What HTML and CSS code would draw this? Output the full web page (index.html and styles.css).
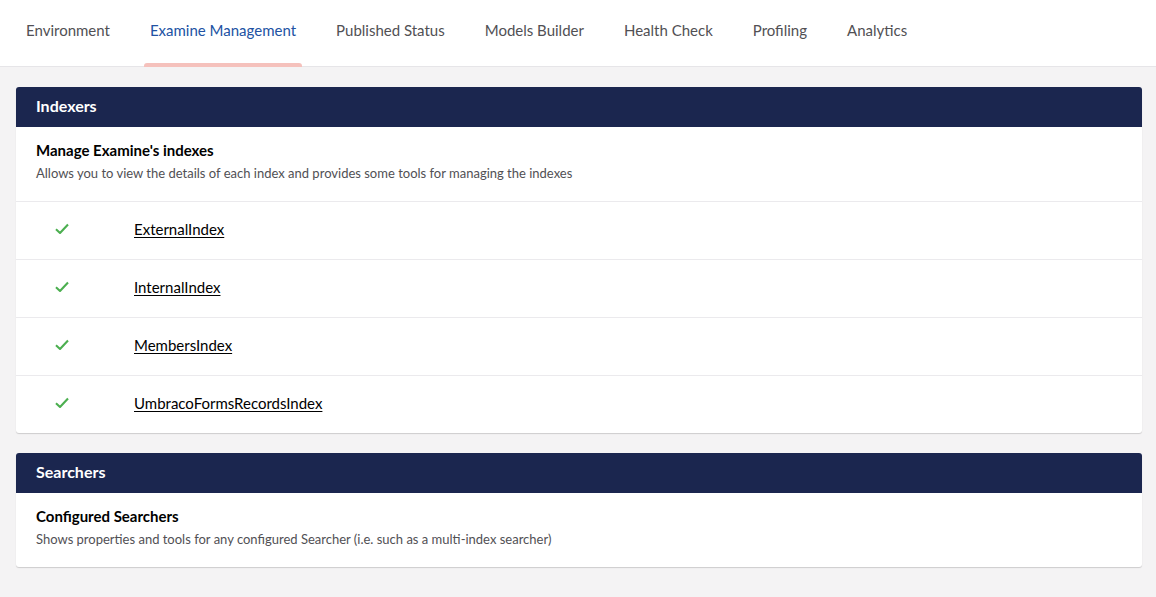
FILE: index.html
```html
<!DOCTYPE html>
<html lang="en">
<head>
<meta charset="utf-8">
<title>Examine Management</title>
<link rel="stylesheet" href="styles.css">
</head>
<body>
<header class="topbar">
  <nav class="tabs">
    <a class="tab">Environment</a>
    <a class="tab active">Examine Management</a>
    <a class="tab">Published Status</a>
    <a class="tab">Models Builder</a>
    <a class="tab">Health Check</a>
    <a class="tab">Profiling</a>
    <a class="tab">Analytics</a>
  </nav>
</header>
<main class="content">
  <section class="panel">
    <div class="panel-head">Indexers</div>
    <div class="intro">
      <div class="intro-title">Manage Examine's indexes</div>
      <div class="intro-desc">Allows you to view the details of each index and provides some tools for managing the indexes</div>
    </div>
    <div class="row">
      <svg class="check" viewBox="0 0 14 12"><path d="M1 6.3 L5 10 L13 1.5" fill="none" stroke="#4caf50" stroke-width="2.1" stroke-linejoin="round"/></svg>
      <a class="idx">ExternalIndex</a>
    </div>
    <div class="row">
      <svg class="check" viewBox="0 0 14 12"><path d="M1 6.3 L5 10 L13 1.5" fill="none" stroke="#4caf50" stroke-width="2.1" stroke-linejoin="round"/></svg>
      <a class="idx">InternalIndex</a>
    </div>
    <div class="row">
      <svg class="check" viewBox="0 0 14 12"><path d="M1 6.3 L5 10 L13 1.5" fill="none" stroke="#4caf50" stroke-width="2.1" stroke-linejoin="round"/></svg>
      <a class="idx">MembersIndex</a>
    </div>
    <div class="row">
      <svg class="check" viewBox="0 0 14 12"><path d="M1 6.3 L5 10 L13 1.5" fill="none" stroke="#4caf50" stroke-width="2.1" stroke-linejoin="round"/></svg>
      <a class="idx">UmbracoFormsRecordsIndex</a>
    </div>
  </section>
  <section class="panel">
    <div class="panel-head">Searchers</div>
    <div class="intro">
      <div class="intro-title">Configured Searchers</div>
      <div class="intro-desc">Shows properties and tools for any configured Searcher (i.e. such as a multi-index searcher)</div>
    </div>
  </section>
</main>
</body>
</html>
```
FILE: styles.css
```css
html, body {
  margin: 0;
  padding: 0;
}
body {
  background: #f4f3f4;
  font-family: Lato, "Open Sans", sans-serif;
  color: #000;
  height: 597px;
  overflow: hidden;
}
.topbar {
  background: #fff;
  height: 66px;
  border-bottom: 1px solid #e6e5e8;
}
.tabs {
  display: flex;
  height: 66px;
  padding-left: 6px;
}
.tab {
  position: relative;
  display: flex;
  align-items: center;
  padding: 0 20px 6px;
  font-size: 15px;
  color: #515054;
  cursor: pointer;
}
.tab.active {
  color: #2152a3;
}
.tab.active::after {
  content: "";
  position: absolute;
  left: 14px;
  right: 14px;
  bottom: -1px;
  height: 4px;
  background: #f5c1bc;
  border-radius: 3px 3px 0 0;
}
.content {
  display: flex;
  flex-direction: column;
  gap: 20px;
  padding: 20px 14px 0 16px;
}
.panel {
  background: #fff;
  border-radius: 3px;
  box-shadow: 0 1px 1px rgba(0, 0, 0, 0.16);
  overflow: hidden;
}
.panel-head {
  box-sizing: border-box;
  background: #1b264f;
  color: #fff;
  height: 40px;
  display: flex;
  align-items: center;
  padding: 0 0 4px 20px;
  font-size: 16px;
  font-weight: 700;
}
.intro {
  padding: 13px 20px 18px;
}
.intro-title {
  font-size: 15px;
  font-weight: 700;
  line-height: 20px;
  margin-bottom: 3px;
}
.intro-desc {
  font-size: 13px;
  line-height: 20px;
  color: #515054;
}
.row {
  box-sizing: border-box;
  display: flex;
  align-items: center;
  height: 58px;
  border-top: 1px solid #ebeaed;
  padding: 0 0 4px 39px;
}
.check {
  width: 14px;
  height: 12px;
  margin-right: 65px;
}
.idx {
  font-size: 15px;
  color: #000;
  text-decoration: underline;
  text-underline-offset: 2px;
  cursor: pointer;
}
```
